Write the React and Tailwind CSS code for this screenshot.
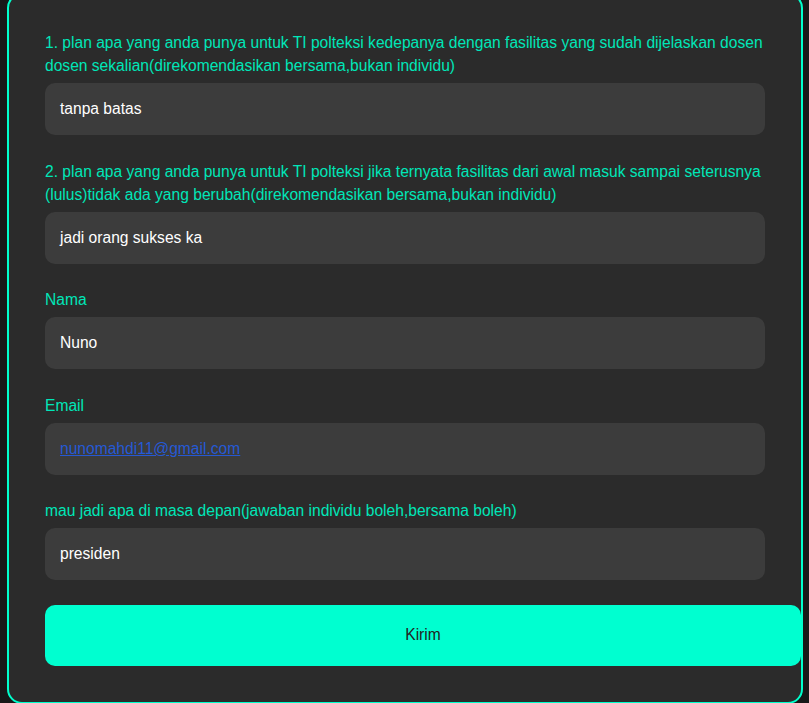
import React from "react";

const fields = [
  {
    label:
      "1. plan apa yang anda punya untuk TI polteksi kedepanya dengan fasilitas yang sudah dijelaskan dosen dosen sekalian(direkomendasikan bersama,bukan individu)",
    value: "tanpa batas",
  },
  {
    label:
      "2. plan apa yang anda punya untuk TI polteksi jika ternyata fasilitas dari awal masuk sampai seterusnya (lulus)tidak ada yang berubah(direkomendasikan bersama,bukan individu)",
    value: "jadi orang sukses ka",
  },
  { label: "Nama", value: "Nuno" },
  { label: "Email", value: "nunomahdi11@gmail.com", link: true },
  {
    label: "mau jadi apa di masa depan(jawaban individu boleh,bersama boleh)",
    value: "presiden",
  },
];

export default function App() {
  return (
    <div
      className="min-h-[703px] w-[809px] overflow-hidden bg-[#181818]"
      style={{ fontFamily: '"Liberation Sans", Arial, sans-serif' }}
    >
      <div className="-mt-[7px] ml-[7px] w-[796px] rounded-[15px] border-2 border-[#00ffcc] bg-[#2b2b2b] p-[36px]">
        <div className="flex flex-col gap-[24.5px]">
          {fields.map((f, i) => (
            <div key={i} className="flex flex-col">
              <div className="mb-[6px] text-[15.6px] leading-[23px] text-[#00e6b8]">
                {f.label}
              </div>
              <div className="flex h-[52px] items-center rounded-[10px] bg-[#3c3c3c] pl-[15px] text-[15.6px]">
                {f.link ? (
                  <span className="text-[#2559d4] underline">{f.value}</span>
                ) : (
                  <span className="text-white">{f.value}</span>
                )}
              </div>
            </div>
          ))}
          <button className="flex h-[61px] w-[756px] items-center justify-center rounded-[10px] bg-[#00ffd0] text-[15.6px] text-[#222222]">
            Kirim
          </button>
        </div>
      </div>
    </div>
  );
}
